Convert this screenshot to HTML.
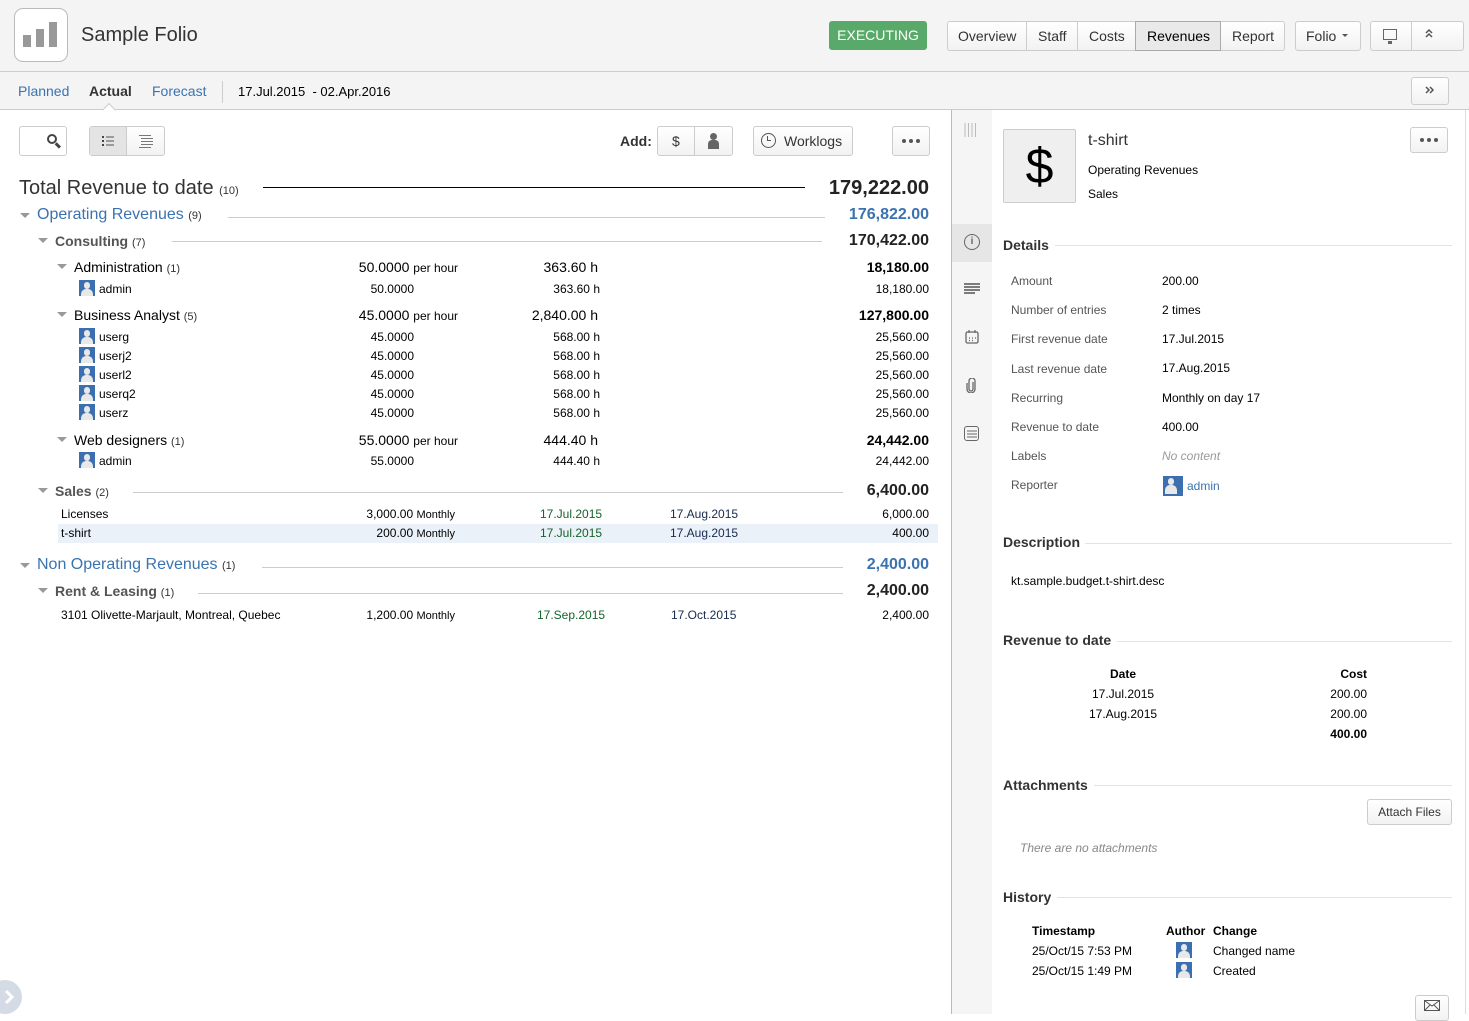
<!DOCTYPE html>
<html><head><meta charset="utf-8"><style>
*{box-sizing:border-box;margin:0;padding:0}
body{width:1469px;height:1014px;overflow:hidden;background:#fff;font-family:"Liberation Sans",Arial,sans-serif;color:#000;position:relative}
.a{position:absolute;white-space:nowrap;line-height:16px}
.btn{position:absolute;border:1px solid #ccc;border-radius:3px;background:linear-gradient(#fff,#f2f2f2);font-size:14px;color:#333;text-align:center}
.hr{position:absolute;height:1px;background:#ccc}
.tri{position:absolute;width:0;height:0;border-left:5px solid transparent;border-right:5px solid transparent;border-top:5px solid #999}
.av{position:absolute;width:16px;height:16px;background:#3b6fb0;overflow:hidden}
.av:before{content:"";position:absolute;left:5px;top:2px;width:6px;height:7px;border-radius:3px;background:#e8e8e8}
.av:after{content:"";position:absolute;left:2px;top:9px;width:12px;height:9px;border-radius:5px 5px 0 0;background:#e8e8e8}
.s12{font-size:12px}.s13{font-size:13px}.s14{font-size:14px}
.cnt{font-size:11px;color:#333}
.lbl{font-size:12px;color:#555}
.sec{font-size:14px;font-weight:bold;color:#333}
.g{color:#14632a}.n{color:#172b4d}
.dots{position:absolute;display:flex;gap:3px;justify-content:center;align-items:center}
.dots i{display:block;width:4px;height:4px;border-radius:50%;background:#555}
</style></head><body>
<div style="position:absolute;left:0;top:0;width:1469px;height:110px;background:#f4f4f4;border-bottom:1px solid #ccc"></div>
<div style="position:absolute;left:0;top:71px;width:1469px;height:1px;background:#ccc"></div>
<div style="position:absolute;left:14px;top:8px;width:54px;height:54px;border:1px solid #bbb;border-radius:9px;background:#fff">
 <div style="position:absolute;left:8px;top:26px;width:8px;height:12px;background:#999"></div>
 <div style="position:absolute;left:21px;top:20px;width:8px;height:18px;background:#999"></div>
 <div style="position:absolute;left:34px;top:13px;width:8px;height:25px;background:#999"></div>
</div>
<div class="a" style="left:81px;top:23px;font-size:20px;line-height:24px;color:#333">Sample Folio</div>
<div style="position:absolute;left:829px;top:21px;width:98px;height:29px;background:#59a96a;border-radius:3px;color:#fff;font-size:14px;line-height:29px;text-align:center">EXECUTING</div>
<div class="btn" style="left:947px;top:21px;width:338px;height:30px"></div>
<div class="a s14" style="left:958px;top:28px;color:#333">Overview</div>
<div style="position:absolute;left:1026px;top:22px;width:1px;height:28px;background:#ccc"></div>
<div class="a s14" style="left:1038px;top:28px;color:#333">Staff</div>
<div style="position:absolute;left:1077px;top:22px;width:1px;height:28px;background:#ccc"></div>
<div class="a s14" style="left:1089px;top:28px;color:#333">Costs</div>
<div style="position:absolute;left:1135px;top:21px;width:86px;height:30px;background:#e9e9e9;border:1px solid #aaa"></div>
<div class="a s14" style="left:1147px;top:28px;color:#000">Revenues</div>
<div class="a s14" style="left:1232px;top:28px;color:#333">Report</div>
<div class="btn" style="left:1295px;top:21px;width:66px;height:30px"></div>
<div class="a s14" style="left:1306px;top:28px;color:#333">Folio</div>
<div class="tri" style="left:1342px;top:34px;border-left-width:3px;border-right-width:3px;border-top:3px solid #555"></div>
<div class="btn" style="left:1370px;top:21px;width:94px;height:30px"></div>
<div style="position:absolute;left:1411px;top:22px;width:1px;height:28px;background:#ccc"></div>
<div style="position:absolute;left:1383px;top:29px;width:14px;height:11px;border:1.5px solid #666"></div>
<div style="position:absolute;left:1388px;top:41px;width:4px;height:3px;background:#666"></div>
<svg style="position:absolute;left:1424px;top:28px" width="10" height="10" viewBox="0 0 10 10"><path d="M2 5 L5 2 L8 5 M2 9 L5 6 L8 9" fill="none" stroke="#555" stroke-width="1.5"/></svg>
<div class="a s14" style="left:18px;top:83px;color:#3b73af">Planned</div>
<div class="a s14" style="left:89px;top:83px;color:#333;font-weight:bold">Actual</div>
<div class="a s14" style="left:152px;top:83px;color:#3b73af">Forecast</div>
<div style="position:absolute;left:222px;top:81px;width:1px;height:22px;background:#ccc"></div>
<div class="a s13" style="left:238px;top:84px">17.Jul.2015 &nbsp;- 02.Apr.2016</div>
<div style="position:absolute;left:104px;top:105px;width:10px;height:10px;background:#fff;border-left:1px solid #ccc;border-top:1px solid #ccc;transform:rotate(45deg)"></div>
<div class="btn" style="left:1411px;top:77px;width:38px;height:28px"></div>
<svg style="position:absolute;left:1425px;top:85px" width="10" height="10" viewBox="0 0 10 10"><path d="M1 2 L4 5 L1 8 M5 2 L8 5 L5 8" fill="none" stroke="#555" stroke-width="1.5"/></svg>
<div style="position:absolute;left:951px;top:110px;width:1px;height:904px;background:#bbb"></div>
<div style="position:absolute;left:952px;top:110px;width:40px;height:904px;background:#f5f5f5"></div>
<div style="position:absolute;left:952px;top:224px;width:40px;height:38px;background:#e6e6e6"></div>
<div style="position:absolute;left:1465px;top:110px;width:1px;height:904px;background:#ddd"></div>
<!-- toolbar -->
<div class="btn" style="left:19px;top:126px;width:48px;height:30px;background:#fff"></div>
<div style="position:absolute;left:47px;top:134px;width:10px;height:10px;border:2px solid #444;border-radius:50%"></div>
<div style="position:absolute;left:55px;top:144px;width:6px;height:2.5px;background:#444;transform:rotate(45deg)"></div>
<div class="btn" style="left:89px;top:126px;width:76px;height:30px"></div>
<div style="position:absolute;left:90px;top:127px;width:37px;height:28px;background:#e4e4e4;border-right:1px solid #ccc"></div>
<svg style="position:absolute;left:101px;top:135px" width="14" height="12" viewBox="0 0 14 12"><path d="M1 2h2M1 6h2M1 10h2" stroke="#444" stroke-width="2"/><path d="M5 2h8M5 6h8M5 10h8" stroke="#555" stroke-width="1"/></svg>
<svg style="position:absolute;left:138px;top:134px" width="16" height="14" viewBox="0 0 16 14"><path d="M1 1.5h12M3 4.5h12M3 7.5h12M3 10.5h12M1 13.5h12" stroke="#777" stroke-width="1"/></svg>
<div class="a s14" style="left:620px;top:133px;font-weight:bold;color:#333">Add:</div>
<div class="btn" style="left:657px;top:126px;width:76px;height:30px"></div>
<div style="position:absolute;left:694px;top:127px;width:1px;height:28px;background:#ccc"></div>
<div class="a s14" style="left:672px;top:133px;color:#333">$</div>
<div style="position:absolute;left:710px;top:133px;width:7px;height:7px;border-radius:50%;background:#666"></div>
<div style="position:absolute;left:708px;top:140px;width:11px;height:9px;border-radius:4px 4px 0 0;background:#666"></div>
<div class="btn" style="left:753px;top:126px;width:100px;height:30px"></div>
<div style="position:absolute;left:761px;top:133px;width:15px;height:15px;border:1.5px solid #555;border-radius:50%"></div>
<div style="position:absolute;left:767px;top:136px;width:4px;height:5px;border-left:1.5px solid #555;border-bottom:1.5px solid #555"></div>
<div class="a s14" style="left:784px;top:133px;color:#333">Worklogs</div>
<div class="btn" style="left:892px;top:126px;width:38px;height:30px"></div>
<div class="dots" style="left:892px;top:126px;width:38px;height:30px"><i></i><i></i><i></i></div>
<!-- table -->
<div class="a" style="left:19px;top:177px;font-size:20px;line-height:22px;color:#333">Total Revenue to date <span class="cnt">(10)</span></div>
<div class="hr" style="left:263px;top:187px;width:542px;background:#000"></div>
<div class="a" style="right:540px;top:177px;font-size:20px;line-height:22px;color:#222"><b>179,222.00</b></div>

<div class="tri" style="left:20px;top:213px"></div>
<div class="a" style="left:37px;top:206px;font-size:16px;line-height:18px;color:#3b73af">Operating Revenues <span class="cnt">(9)</span></div>
<div class="hr" style="left:228px;top:217px;width:597px"></div>
<div class="a" style="right:540px;top:206px;font-size:16px;line-height:18px;color:#3b73af"><b>176,822.00</b></div>

<div class="tri" style="left:38px;top:238px"></div>
<div class="a" style="left:55px;top:233px;font-size:14px;font-weight:bold;color:#555">Consulting <span class="cnt" style="font-weight:normal">(7)</span></div>
<div class="hr" style="left:172px;top:241px;width:650px"></div>
<div class="a" style="right:540px;top:232px;font-size:16px;line-height:18px;color:#222"><b>170,422.00</b></div>

<div class="tri" style="left:57px;top:264px"></div>
<div class="a s14" style="left:74px;top:259px">Administration <span class="cnt">(1)</span></div>
<div class="a s14" style="right:1011px;top:259px">50.0000 <span class="s12">per hour</span></div>
<div class="a s14" style="right:871px;top:259px">363.60 h</div>
<div class="a s14" style="right:540px;top:259px"><b>18,180.00</b></div>
<div class="av" style="left:79px;top:280px"></div>
<div class="a s12" style="left:99px;top:281px">admin</div>
<div class="a s12" style="right:1055px;top:281px">50.0000</div>
<div class="a s12" style="right:869px;top:281px">363.60 h</div>
<div class="a s12" style="right:540px;top:281px">18,180.00</div>

<div class="tri" style="left:57px;top:312px"></div>
<div class="a s14" style="left:74px;top:307px">Business Analyst <span class="cnt">(5)</span></div>
<div class="a s14" style="right:1011px;top:307px">45.0000 <span class="s12">per hour</span></div>
<div class="a s14" style="right:871px;top:307px">2,840.00 h</div>
<div class="a s14" style="right:540px;top:307px"><b>127,800.00</b></div>
<div class="av" style="left:79px;top:328px"></div><div class="a s12" style="left:99px;top:329px">userg</div>
<div class="a s12" style="right:1055px;top:329px">45.0000</div><div class="a s12" style="right:869px;top:329px">568.00 h</div><div class="a s12" style="right:540px;top:329px">25,560.00</div>
<div class="av" style="left:79px;top:347px"></div><div class="a s12" style="left:99px;top:348px">userj2</div>
<div class="a s12" style="right:1055px;top:348px">45.0000</div><div class="a s12" style="right:869px;top:348px">568.00 h</div><div class="a s12" style="right:540px;top:348px">25,560.00</div>
<div class="av" style="left:79px;top:366px"></div><div class="a s12" style="left:99px;top:367px">userl2</div>
<div class="a s12" style="right:1055px;top:367px">45.0000</div><div class="a s12" style="right:869px;top:367px">568.00 h</div><div class="a s12" style="right:540px;top:367px">25,560.00</div>
<div class="av" style="left:79px;top:385px"></div><div class="a s12" style="left:99px;top:386px">userq2</div>
<div class="a s12" style="right:1055px;top:386px">45.0000</div><div class="a s12" style="right:869px;top:386px">568.00 h</div><div class="a s12" style="right:540px;top:386px">25,560.00</div>
<div class="av" style="left:79px;top:404px"></div><div class="a s12" style="left:99px;top:405px">userz</div>
<div class="a s12" style="right:1055px;top:405px">45.0000</div><div class="a s12" style="right:869px;top:405px">568.00 h</div><div class="a s12" style="right:540px;top:405px">25,560.00</div>

<div class="tri" style="left:57px;top:437px"></div>
<div class="a s14" style="left:74px;top:432px">Web designers <span class="cnt">(1)</span></div>
<div class="a s14" style="right:1011px;top:432px">55.0000 <span class="s12">per hour</span></div>
<div class="a s14" style="right:871px;top:432px">444.40 h</div>
<div class="a s14" style="right:540px;top:432px"><b>24,442.00</b></div>
<div class="av" style="left:79px;top:452px"></div><div class="a s12" style="left:99px;top:453px">admin</div>
<div class="a s12" style="right:1055px;top:453px">55.0000</div><div class="a s12" style="right:869px;top:453px">444.40 h</div><div class="a s12" style="right:540px;top:453px">24,442.00</div>

<div class="tri" style="left:38px;top:488px"></div>
<div class="a" style="left:55px;top:483px;font-size:14px;font-weight:bold;color:#555">Sales <span class="cnt" style="font-weight:normal">(2)</span></div>
<div class="hr" style="left:133px;top:492px;width:710px"></div>
<div class="a" style="right:540px;top:482px;font-size:16px;line-height:18px;color:#222"><b>6,400.00</b></div>
<div class="a s12" style="left:61px;top:506px">Licenses</div>
<div class="a s12" style="right:1014px;top:506px">3,000.00 <span style="font-size:11px">Monthly</span></div>
<div class="a s12 g" style="left:540px;top:506px">17.Jul.2015</div>
<div class="a s12 n" style="left:670px;top:506px">17.Aug.2015</div>
<div class="a s12" style="right:540px;top:506px">6,000.00</div>
<div style="position:absolute;left:58px;top:524px;width:880px;height:19px;background:#ebf1f9"></div>
<div class="a s12" style="left:61px;top:525px">t-shirt</div>
<div class="a s12" style="right:1014px;top:525px">200.00 <span style="font-size:11px">Monthly</span></div>
<div class="a s12 g" style="left:540px;top:525px">17.Jul.2015</div>
<div class="a s12 n" style="left:670px;top:525px">17.Aug.2015</div>
<div class="a s12" style="right:540px;top:525px">400.00</div>

<div class="tri" style="left:20px;top:563px"></div>
<div class="a" style="left:37px;top:556px;font-size:16px;line-height:18px;color:#3b73af">Non Operating Revenues <span class="cnt">(1)</span></div>
<div class="hr" style="left:262px;top:567px;width:581px"></div>
<div class="a" style="right:540px;top:556px;font-size:16px;line-height:18px;color:#3b73af"><b>2,400.00</b></div>
<div class="tri" style="left:38px;top:588px"></div>
<div class="a" style="left:55px;top:583px;font-size:14px;font-weight:bold;color:#555">Rent &amp; Leasing <span class="cnt" style="font-weight:normal">(1)</span></div>
<div class="hr" style="left:198px;top:593px;width:645px"></div>
<div class="a" style="right:540px;top:582px;font-size:16px;line-height:18px;color:#222"><b>2,400.00</b></div>
<div class="a s12" style="left:61px;top:607px">3101 Olivette-Marjault, Montreal, Quebec</div>
<div class="a s12" style="right:1014px;top:607px">1,200.00 <span style="font-size:11px">Monthly</span></div>
<div class="a s12 g" style="left:537px;top:607px">17.Sep.2015</div>
<div class="a s12 n" style="left:671px;top:607px">17.Oct.2015</div>
<div class="a s12" style="right:540px;top:607px">2,400.00</div>

<div style="position:absolute;left:-12px;top:980px;width:34px;height:34px;border-radius:50%;background:#d4dbe5"></div>
<svg style="position:absolute;left:3px;top:988px" width="12" height="18" viewBox="0 0 12 18"><path d="M3 3 L9 9 L3 15" fill="none" stroke="#fff" stroke-width="3"/></svg>

<!-- right sidebar icons -->
<svg style="position:absolute;left:964px;top:123px" width="14" height="14" viewBox="0 0 14 14"><path d="M1 0v14M4.5 0v14M8 0v14M11.5 0v14" stroke="#bbb" stroke-width="1"/></svg>
<div style="position:absolute;left:964px;top:234px;width:16px;height:16px;border:1.5px solid #666;border-radius:50%;font-size:10px;line-height:13px;text-align:center;color:#666;font-weight:bold">i</div>
<svg style="position:absolute;left:964px;top:283px" width="16" height="12" viewBox="0 0 16 12"><path d="M0 1h16M0 4h16M0 7h16M0 10h11" stroke="#555" stroke-width="1.5"/></svg>
<svg style="position:absolute;left:965px;top:330px" width="14" height="14" viewBox="0 0 14 14"><rect x="1" y="2" width="12" height="11" rx="1.5" fill="none" stroke="#666" stroke-width="1.3"/><path d="M4 0v3M10 0v3M4 8h1M7 8h1M10 8h1M4 10.5h1M7 10.5h1" stroke="#666" stroke-width="1.2"/></svg>
<svg style="position:absolute;left:966px;top:378px" width="10" height="15" viewBox="0 0 10 15"><path d="M7 4v7a2 2 0 0 1-4 0V3a3 3 0 0 1 6 0v8a4 4 0 0 1-8 0V5" fill="none" stroke="#666" stroke-width="1.3"/></svg>
<div style="position:absolute;left:964px;top:426px;width:15px;height:15px;border:1.5px solid #666;border-radius:3px"></div>
<svg style="position:absolute;left:967px;top:430px" width="10" height="8" viewBox="0 0 10 8"><path d="M0 1h10M0 4h10M0 7h10" stroke="#666" stroke-width="1"/></svg>

<!-- right content -->
<div style="position:absolute;left:1003px;top:129px;width:73px;height:74px;border:1px solid #ccc;border-radius:2px;background:#efefef;font-size:50px;line-height:72px;text-align:center;color:#000">$</div>
<div class="a" style="left:1088px;top:133px;font-size:16px;color:#333">t-shirt</div>
<div class="a s12" style="left:1088px;top:162px">Operating Revenues</div>
<div class="a s12" style="left:1088px;top:186px">Sales</div>
<div class="btn" style="left:1410px;top:127px;width:38px;height:26px"></div>
<div class="dots" style="left:1410px;top:127px;width:38px;height:26px"><i></i><i></i><i></i></div>

<div class="a sec" style="left:1003px;top:237px">Details</div>
<div class="hr" style="left:1055px;top:245px;width:397px;background:#e3e3e3"></div>
<div class="a lbl" style="left:1011px;top:273px">Amount</div><div class="a s12" style="left:1162px;top:273px">200.00</div>
<div class="a lbl" style="left:1011px;top:302px">Number of entries</div><div class="a s12" style="left:1162px;top:302px">2 times</div>
<div class="a lbl" style="left:1011px;top:331px">First revenue date</div><div class="a s12" style="left:1162px;top:331px">17.Jul.2015</div>
<div class="a lbl" style="left:1011px;top:361px">Last revenue date</div><div class="a s12" style="left:1162px;top:360px">17.Aug.2015</div>
<div class="a lbl" style="left:1011px;top:390px">Recurring</div><div class="a s12" style="left:1162px;top:390px">Monthly on day 17</div>
<div class="a lbl" style="left:1011px;top:419px">Revenue to date</div><div class="a s12" style="left:1162px;top:419px">400.00</div>
<div class="a lbl" style="left:1011px;top:448px">Labels</div><div class="a s12" style="left:1162px;top:448px;color:#999;font-style:italic">No content</div>
<div class="a lbl" style="left:1011px;top:477px">Reporter</div>
<div class="av" style="left:1163px;top:476px;width:20px;height:20px"></div>
<div class="a s12" style="left:1187px;top:478px;color:#3b73af">admin</div>

<div class="a sec" style="left:1003px;top:534px">Description</div>
<div class="hr" style="left:1085px;top:543px;width:367px;background:#e3e3e3"></div>
<div class="a s12" style="left:1011px;top:573px">kt.sample.budget.t-shirt.desc</div>

<div class="a sec" style="left:1003px;top:632px">Revenue to date</div>
<div class="hr" style="left:1117px;top:641px;width:335px;background:#e3e3e3"></div>
<div class="a s12" style="left:1110px;top:666px;font-weight:bold">Date</div>
<div class="a s12" style="right:102px;top:666px;font-weight:bold">Cost</div>
<div class="a s12" style="left:1092px;top:686px">17.Jul.2015</div><div class="a s12" style="right:102px;top:686px">200.00</div>
<div class="a s12" style="left:1089px;top:706px">17.Aug.2015</div><div class="a s12" style="right:102px;top:706px">200.00</div>
<div class="a s12" style="right:102px;top:726px;font-weight:bold">400.00</div>

<div class="a sec" style="left:1003px;top:777px">Attachments</div>
<div class="hr" style="left:1094px;top:785px;width:358px;background:#e3e3e3"></div>
<div class="btn" style="left:1367px;top:799px;width:85px;height:26px;line-height:24px;font-size:12px">Attach Files</div>
<div class="a s12" style="left:1020px;top:840px;color:#888;font-style:italic">There are no attachments</div>

<div class="a sec" style="left:1003px;top:889px">History</div>
<div class="hr" style="left:1057px;top:897px;width:395px;background:#e3e3e3"></div>
<div class="a s12" style="left:1032px;top:923px;font-weight:bold">Timestamp</div>
<div class="a s12" style="left:1166px;top:923px;font-weight:bold">Author</div>
<div class="a s12" style="left:1213px;top:923px;font-weight:bold">Change</div>
<div class="a s12" style="left:1032px;top:943px">25/Oct/15 7:53 PM</div>
<div class="av" style="left:1176px;top:942px"></div>
<div class="a s12" style="left:1213px;top:943px">Changed name</div>
<div class="a s12" style="left:1032px;top:963px">25/Oct/15 1:49 PM</div>
<div class="av" style="left:1176px;top:962px"></div>
<div class="a s12" style="left:1213px;top:963px">Created</div>
<div class="btn" style="left:1415px;top:995px;width:34px;height:26px"></div>
<svg style="position:absolute;left:1424px;top:1000px" width="16" height="11" viewBox="0 0 16 11"><rect x="0.5" y="0.5" width="15" height="10" fill="none" stroke="#555"/><path d="M0.5 0.5 L8 6 L15.5 0.5 M0.5 10.5 L6 5 M15.5 10.5 L10 5" fill="none" stroke="#555"/></svg>
</body></html>
